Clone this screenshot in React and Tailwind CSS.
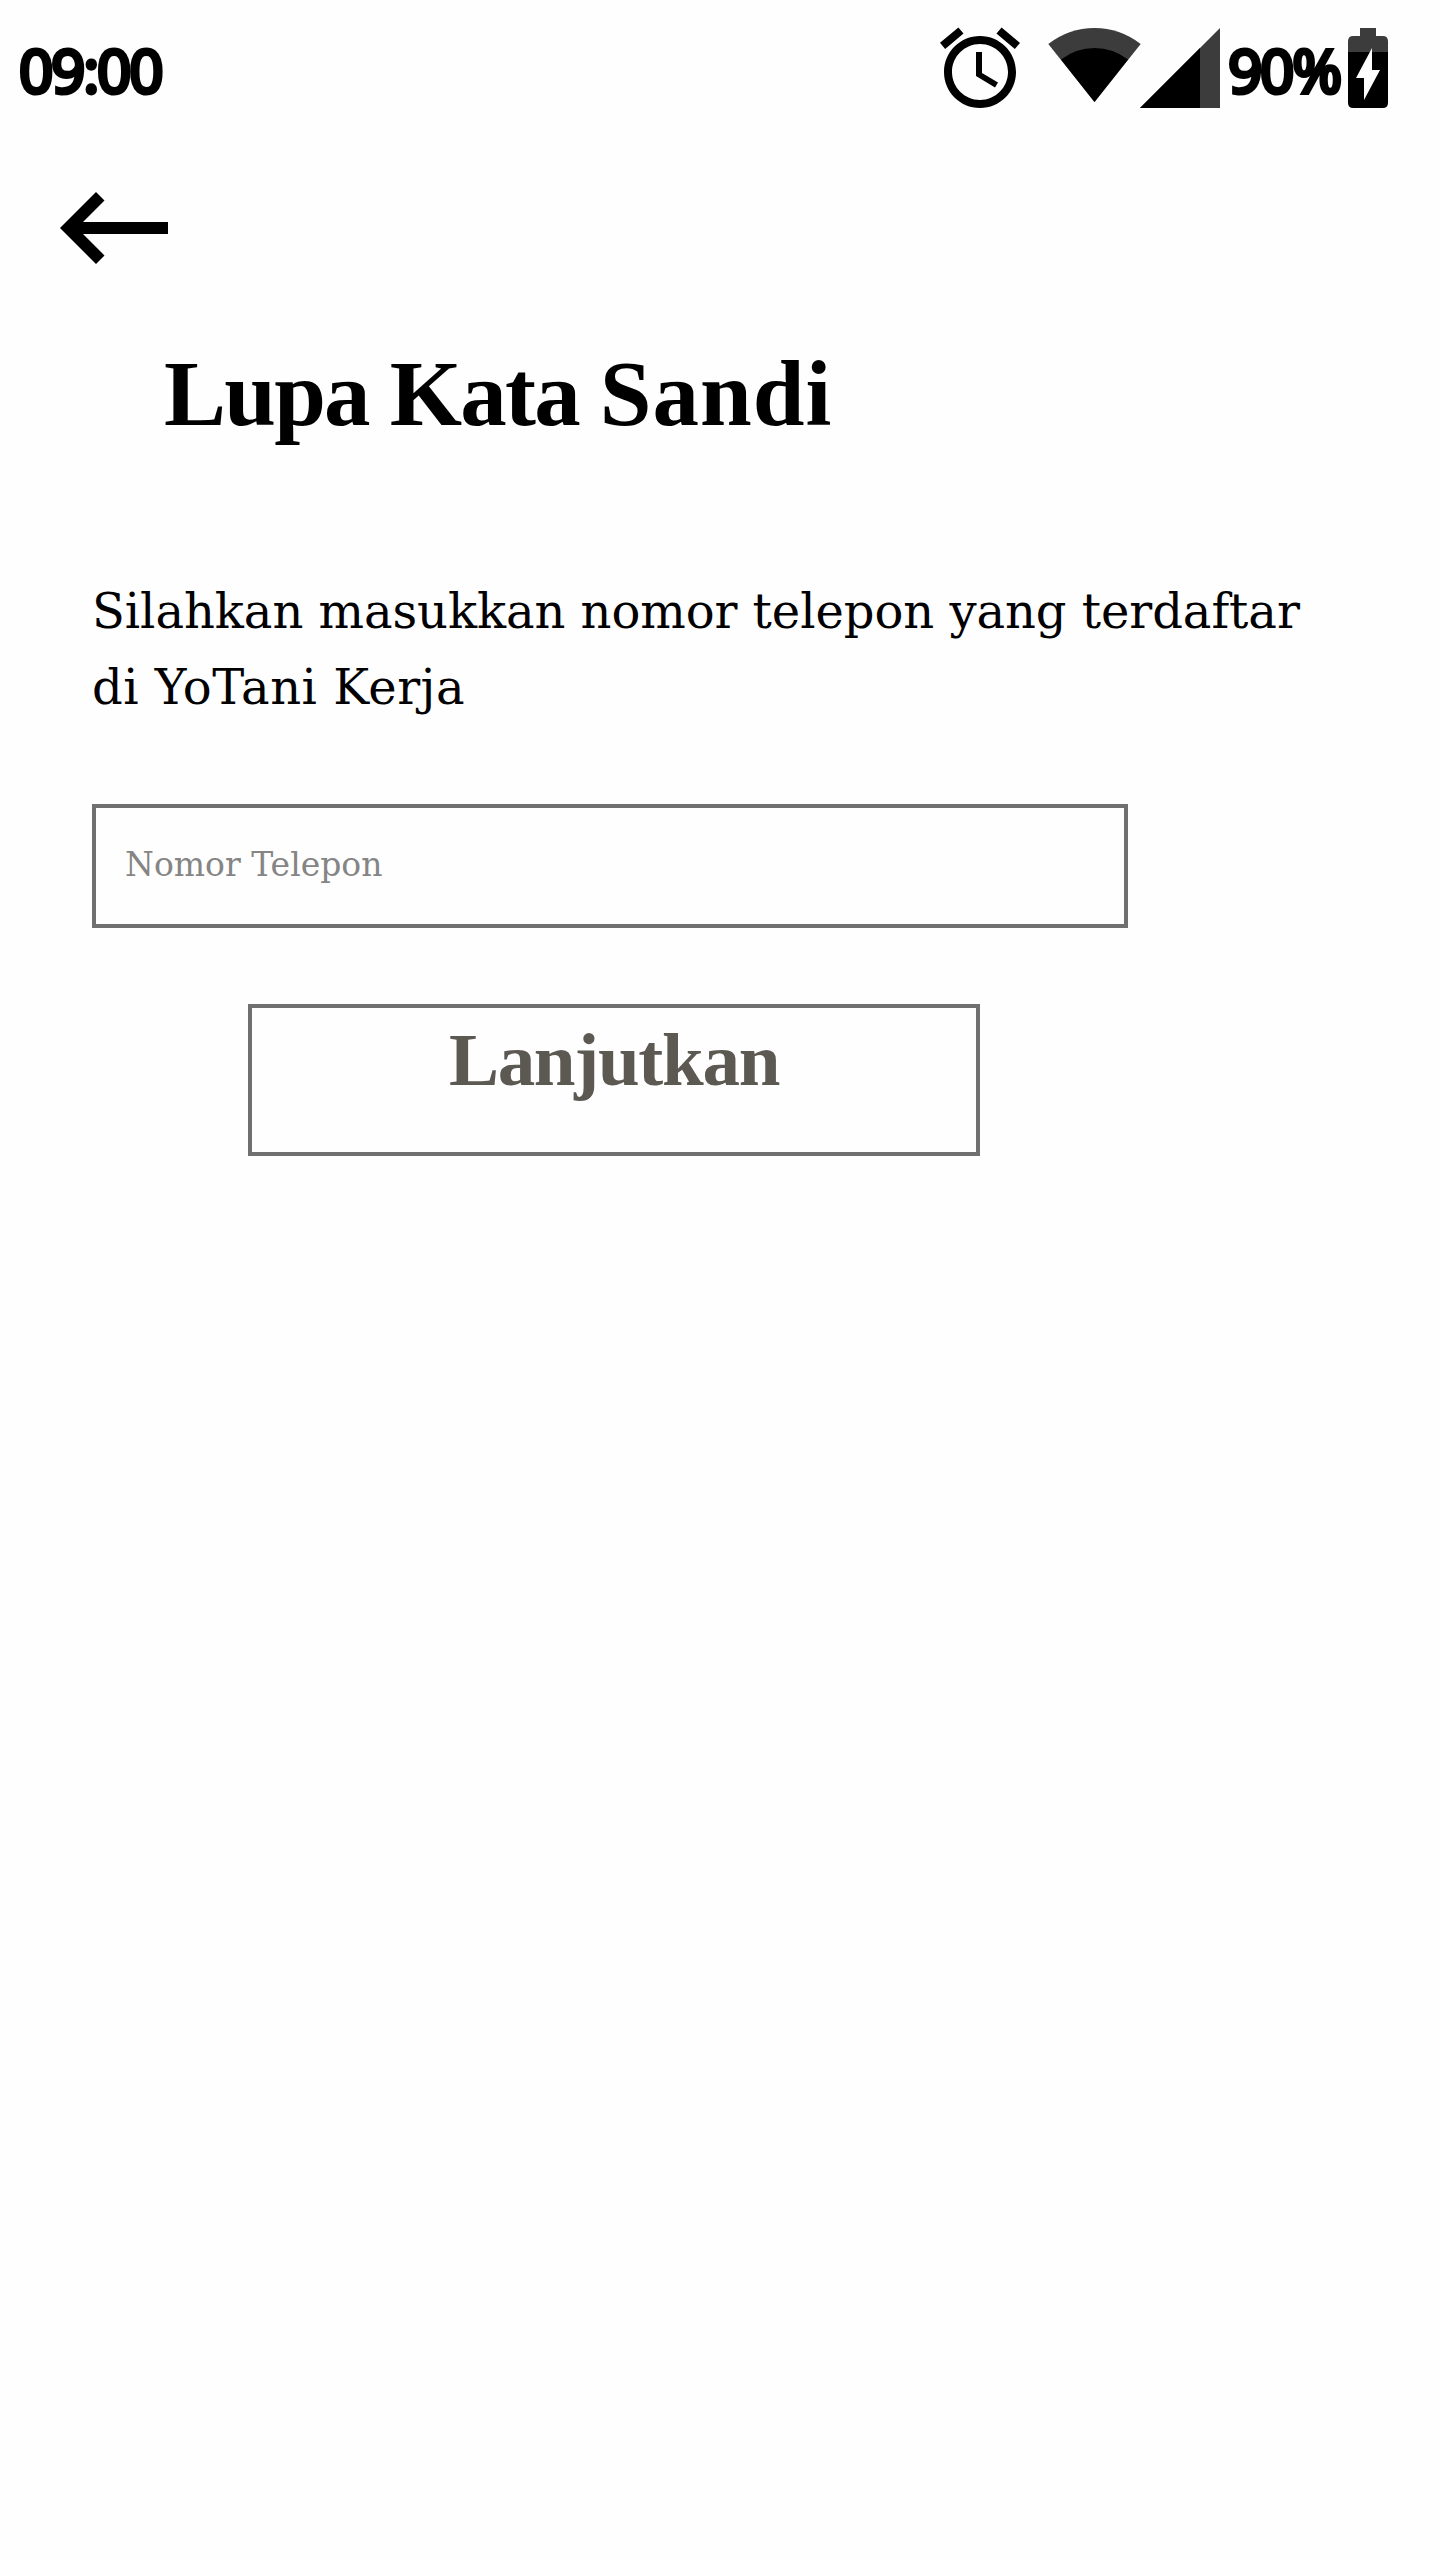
function AlarmIcon() {
  return (
    <svg className="mt-5 size-24 shrink-0" viewBox="0 0 24 24" fill="currentColor">
      <path d="M22 5.72l-4.6-3.86-1.29 1.53 4.6 3.86L22 5.72zM7.88 3.39L6.6 1.86 2 5.71l1.29 1.53 4.59-3.85zM12.5 8H11v6l4.75 2.85.75-1.23-4-2.37V8zM12 4c-4.97 0-9 4.03-9 9s4.02 9 9 9c4.97 0 9-4.03 9-9s-4.03-9-9-9zm0 16c-3.87 0-7-3.13-7-7s3.13-7 7-7 7 3.13 7 7-3.13 7-7 7z" />
    </svg>
  );
}

function WifiIcon() {
  return (
    <svg className="mt-7 ml-5 h-20 w-[93px] shrink-0" viewBox="0 0 93 80">
      <path d="M0.3 16 Q21 0 46.5 0 T92.7 16 L46.5 74 Z" fill="#3c3c3c" />
      <path d="M13 31.5 Q28 20 46.5 20 T80 31.5 L46.5 74 Z" fill="#000" />
    </svg>
  );
}

function SignalIcon() {
  return (
    <svg className="mt-7 -ml-px size-20 shrink-0" viewBox="0 0 80 80">
      <path d="M0 80 80 0V80Z" fill="#3c3c3c" />
      <path d="M0 80 60 20V80Z" fill="#000" />
    </svg>
  );
}

function BatteryIcon() {
  return (
    <svg className="mt-7 h-20 w-10 shrink-0" viewBox="0 0 40 80">
      <path d="M0 24V13.3Q0 8 5.3 8H12V0H28V8H34.7Q40 8 40 13.3V24Z" fill="#3c3c3c" />
      <path d="M0 24H40V74.7Q40 80 34.7 80H5.3Q0 80 0 74.7Z" fill="#000" />
      <path d="M24 20V42H32L16 72V50H8Z" fill="#fefefe" />
    </svg>
  );
}

function StatusBar() {
  return (
    <header className="flex h-48 items-start pl-[19px] font-['Noto_Sans',sans-serif] text-[60px] leading-[84px] tracking-[-2.2px]">
      <span className="mt-[28px] w-[913px] [-webkit-text-stroke:4px_#000]">09:00</span>
      <AlarmIcon />
      <WifiIcon />
      <SignalIcon />
      <span className="mt-[28px] ml-[8px] w-[120px] [-webkit-text-stroke:4px_#000]">90%</span>
      <BatteryIcon />
    </header>
  );
}

export default function App() {
  return (
    <div className="flex h-[2560px] w-[1440px] flex-col items-start overflow-hidden bg-[#fefefe] text-black">
      <StatusBar />
      <button className="ml-[60px] h-[72px]" aria-label="Kembali">
        <svg className="h-[72px] w-[108px]" viewBox="0 0 108 72">
          <path d="M0 36 36 0 44.5 8.5 23 30H108V42H23L44.5 63.5 36 72Z" />
        </svg>
      </button>
      <h1 className="mt-[75px] ml-[164px] font-['Liberation_Serif',serif] text-[93px] leading-[110px] font-bold tracking-[-1.8px] whitespace-nowrap [word-spacing:-0.5px]">
        Lupa Kata <span className="tracking-[1px]">Sandi</span>
      </h1>
      <p className="mt-[124px] ml-[92px] font-['DejaVu_Serif',serif] text-[48px] leading-[76px] tracking-[-0.06px] whitespace-nowrap">
        Silahkan masukkan nomor telepon yang terdaftar
        <br />
        <span className="tracking-[0.5px]">di YoTani Kerja</span>
      </p>
      <input
        className="mt-[79px] ml-[92px] h-[124px] w-[1036px] border-4 border-[#707070] pb-[4px] pl-[29px] font-['DejaVu_Serif',serif] text-[33px] outline-none placeholder:text-[#858585]"
        placeholder="Nomor Telepon"
      />
      <button className="mt-[76px] ml-[248px] flex h-[152px] w-[732px] justify-center border-4 border-[#707070] pt-[10px] font-['Liberation_Serif',serif] text-[75px] leading-[84px] font-bold tracking-[-1.3px] text-[#5c5852]">
        Lanjutkan
      </button>
    </div>
  );
}
